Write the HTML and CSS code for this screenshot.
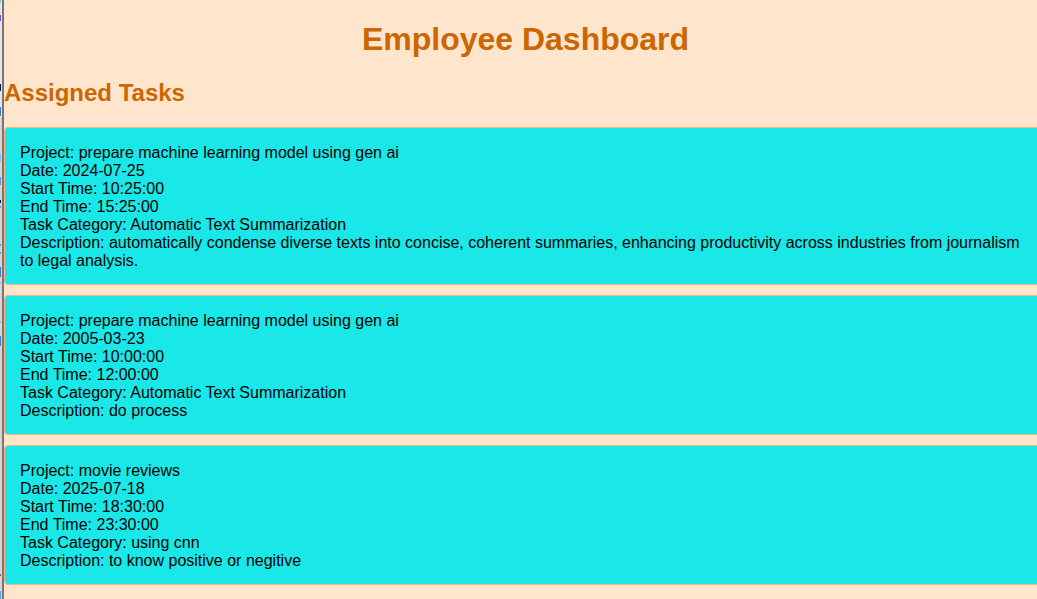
FILE: index.html
```html
<!DOCTYPE html>
<html lang="en">
<head>
<meta charset="utf-8">
<title>Employee Dashboard</title>
<link rel="stylesheet" href="styles.css">
</head>
<body>
<div class="frame">
  <svg class="edge" width="4" height="599" aria-hidden="true">
    <rect class="edge-pane" width="2" height="599"/>
    <rect class="edge-top" width="2" height="118"/>
    <path d="M.5 0v3M.5 153v9M.5 321v2M.5 282v2" stroke="#7cc4ea"/>
    <path d="M.5 15v6M.5 574v2" stroke="#7d4fc4"/>
    <path d="M.5 84v7M.5 200v3" stroke="#0c1848"/>
    <path d="M.5 107v9M.5 267v10M.5 336v10" stroke="#3a7fc4"/>
    <path d="M.5 177v8M.5 206v2M.5 244v2M.5 252v2M.5 591v8" stroke="#579bd8"/>
    <rect class="edge-line" x="2" width="2" height="599"/>
  </svg>
  <main class="page">
    <h1 class="title">Employee Dashboard</h1>
    <h2 class="subtitle">Assigned Tasks</h2>
    <ul class="tasks">
      <li class="task">
        <div>Project: prepare machine learning model using gen ai</div>
        <div>Date: 2024-07-25</div>
        <div>Start Time: 10:25:00</div>
        <div>End Time: 15:25:00</div>
        <div>Task Category: Automatic Text Summarization</div>
        <div>Description: automatically condense diverse texts into concise, coherent summaries, enhancing productivity across industries from journalism to legal analysis.</div>
      </li>
      <li class="task">
        <div>Project: prepare machine learning model using gen ai</div>
        <div>Date: 2005-03-23</div>
        <div>Start Time: 10:00:00</div>
        <div>End Time: 12:00:00</div>
        <div>Task Category: Automatic Text Summarization</div>
        <div>Description: do process</div>
      </li>
      <li class="task">
        <div>Project: movie reviews</div>
        <div>Date: 2025-07-18</div>
        <div>Start Time: 18:30:00</div>
        <div>End Time: 23:30:00</div>
        <div>Task Category: using cnn</div>
        <div>Description: to know positive or negitive</div>
      </li>
    </ul>
  </main>
</div>
</body>
</html>
```
FILE: styles.css
```css
* {
  box-sizing: border-box;
}

body {
  margin: 0;
  background: #ffe5cc;
  color: #000;
  font-family: Arial, "Liberation Sans", sans-serif;
  font-size: 16px;
  line-height: 18px;
}

.frame {
  display: flex;
  overflow: hidden;
}

.edge {
  flex: none;
}

.edge-pane {
  fill: #d6d6d6;
}

.edge-top {
  fill: #e4e4ea;
}

.edge-line {
  fill: #7a7572;
}

/* The page runs slightly past the right side of the window. */
.page {
  flex: 1;
  min-width: 0;
  margin-right: -10px;
}

.title,
.subtitle {
  color: #cc6600;
  font-weight: bold;
}

.title {
  margin: 21px 0 20px;
  font-size: 32px;
  line-height: 37px;
  text-align: center;
}

.subtitle {
  margin: 0 0 19px;
  font-size: 24px;
  line-height: 30px;
}

.tasks {
  margin: 0;
  padding: 0;
  list-style: none;
}

.task {
  margin-bottom: 10px;
  padding: 16px 15px 14px;
  border: 1px solid #ffb380;
  border-radius: 4px;
  background: #1ae8e8;
}
```
